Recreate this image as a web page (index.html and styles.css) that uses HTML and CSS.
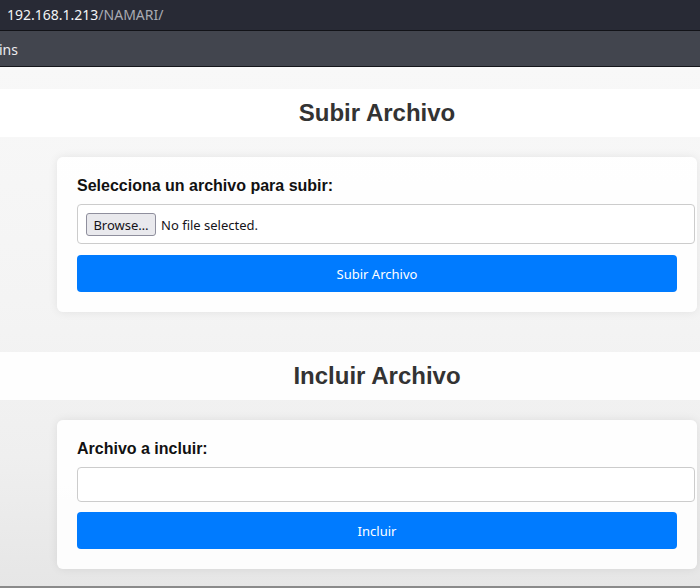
FILE: index.html
```html
<!DOCTYPE html>
<html lang="es">
<head>
<meta charset="utf-8">
<title>NAMARI</title>
<link rel="stylesheet" href="styles.css">
</head>
<body>
<div class="urlbar"><span class="host">192.168.1.213</span><span class="path">/NAMARI/</span></div>
<div class="bookmarks"><span class="bm">ins</span></div>
<div class="page">
  <div class="wrap">
    <section class="section first">
      <h2 class="band">Subir Archivo</h2>
      <div class="card">
        <label class="label">Selecciona un archivo para subir:</label>
        <div class="file-field">
          <span class="browse">Browse…</span>
          <span class="nofile">No file selected.</span>
        </div>
        <button class="btn">Subir Archivo</button>
      </div>
    </section>
    <section class="section second">
      <h2 class="band">Incluir Archivo</h2>
      <div class="card">
        <label class="label">Archivo a incluir:</label>
        <input class="text-field" type="text">
        <button class="btn">Incluir</button>
      </div>
    </section>
  </div>
</div>
</body>
</html>
```
FILE: styles.css
```css
* { box-sizing: border-box; }
html, body { margin: 0; padding: 0; }
body {
  width: 700px;
  height: 588px;
  overflow: hidden;
  font-family: "Liberation Sans", Arial, sans-serif;
  background: #8a8a8a;
}
.urlbar {
  height: 31px;
  background: #282a35;
  border-bottom: 1px solid #121318;
  padding-left: 7px;
  font-family: "Noto Sans", "Open Sans", sans-serif;
  font-size: 14px;
  line-height: 30px;
}
.host { color: #f4f4f6; }
.path { color: #a9abb3; }
.bookmarks {
  height: 36px;
  background: #42454e;
  border-bottom: 1px solid #15161b;
  font-family: "Noto Sans", "Open Sans", sans-serif;
  font-size: 14px;
  line-height: 38px;
  color: #ececef;
  overflow: hidden;
}
.bm { margin-left: -1px; }
.page {
  height: 519px;
  overflow: hidden;
  background: linear-gradient(180deg, #f8f8f8 0%, #f4f4f4 45%, #efefef 75%, #e6e6e6 100%);
}
.wrap { width: 754px; }
.section.first { padding-top: 22px; }
.section.second { padding-top: 40px; }
.band {
  margin: 0;
  height: 48px;
  line-height: 48px;
  background: rgba(255,255,255,0.92);
  text-align: center;
  font-size: 24px;
  font-weight: bold;
  color: #333;
}
.card {
  width: 640px;
  margin: 20px auto 0;
  padding: 20px;
  background: rgba(255,255,255,0.9);
  border-radius: 6px;
  box-shadow: 0 0 10px rgba(0,0,0,0.08);
}
.label {
  display: block;
  font-size: 16px;
  font-weight: bold;
  line-height: 18px;
  color: #111;
  margin-bottom: 9px;
}
.file-field {
  width: 618px;
  height: 40px;
  border: 1px solid #cccccc;
  border-radius: 4px;
  background: #fff;
  padding: 1px 8px 0;
  display: flex;
  align-items: center;
  gap: 5px;
  margin-bottom: 11px;
  font-family: "Noto Sans", "Open Sans", sans-serif;
  font-size: 13px;
  color: #15141a;
}
.browse {
  height: 23px;
  width: 70px;
  display: flex;
  align-items: center;
  justify-content: center;
  background: #e9e9ed;
  border: 1px solid #8f8f9d;
  border-radius: 3px;
}
.text-field {
  display: block;
  width: 618px;
  height: 35px;
  border: 1px solid #cccccc;
  border-radius: 4px;
  background: #fff;
  margin: 0 0 10px;
  padding: 0 8px;
  font-size: 13px;
}
.btn {
  display: block;
  width: 600px;
  height: 37px;
  border: none;
  border-radius: 4px;
  background: #007bff;
  color: #fff;
  font-family: "Noto Sans", "Open Sans", sans-serif;
  font-size: 13px;
  padding: 0;
}
```
